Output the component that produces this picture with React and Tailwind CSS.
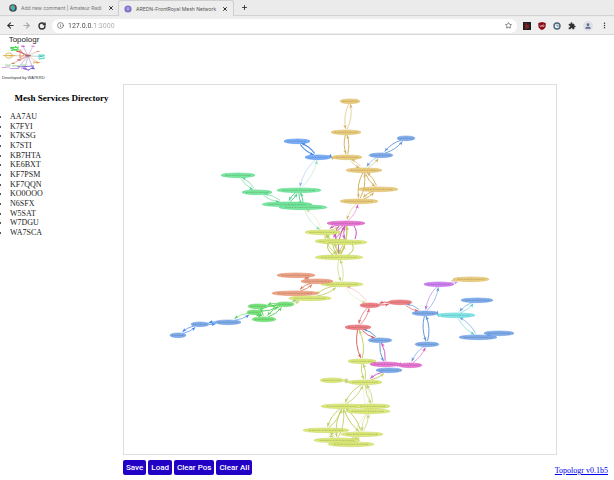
import React from "react";
import { Star, ArrowLeft, ArrowRight, RotateCw, Info, X, Plus } from "lucide-react";
import { MdExtension, MdPerson, MdMoreVert } from "react-icons/md";

const callsigns = [
  "AA7AU", "K7FYI", "K7KSG", "K7STI", "KB7HTA", "KE6BXT", "KF7PSM",
  "KF7QQN", "KO0OOO", "N6SFX", "W5SAT", "W7DGU", "WA7SCA",
];

const hues = {
  tan: { fill: "#eccd7c", line: "#cfab55" },
  blue: { fill: "#80adec", line: "#528cd9" },
  sky: { fill: "#7aaefb", line: "#2e7bea" },
  mint: { fill: "#77e89d", line: "#45cc80" },
  pink: { fill: "#ea76d4", line: "#cb4cb9" },
  lime: { fill: "#dcea78", line: "#bdc957" },
  salmon: { fill: "#efa486", line: "#d67a59" },
  green: { fill: "#78e47c", line: "#4bcf51" },
  red: { fill: "#f08185", line: "#d9525a" },
  violet: { fill: "#cf80f2", line: "#b061da" },
  aqua: { fill: "#80e8ea", line: "#4bc8ca" },
};

// id: [x, y, horizontal radius, hue]
const nodes = {
  a1: [350, 101, 10, "tan"],
  a2: [346, 132, 15, "tan"],
  a3: [347, 157, 15, "tan"],
  b1: [297, 141, 13, "sky"],
  b2: [318, 157, 13, "sky"],
  b3: [406, 138, 9, "blue"],
  b4: [381, 155, 12, "blue"],
  a4: [364, 170, 18, "tan"],
  a5: [378, 189, 20, "tan"],
  a6: [359, 201, 19, "tan"],
  g1: [238, 175, 17, "mint"],
  g2: [257, 192, 15, "mint"],
  g3: [299, 190, 22, "mint"],
  g4: [287, 204, 25, "mint"],
  g5: [303, 207, 24, "mint"],
  m1: [346, 223, 19, "pink"],
  y1: [323, 232, 18, "lime"],
  y2: [332, 241, 17, "lime"],
  y3: [345, 242, 22, "lime"],
  y4: [339, 257, 24, "lime"],
  y5: [342, 284, 21, "lime"],
  s1: [296, 275, 19, "salmon"],
  s2: [317, 281, 16, "salmon"],
  s3: [295, 293, 23, "salmon"],
  y6: [310, 298, 21, "lime"],
  h1: [258, 306, 10, "green"],
  h2: [254, 312, 7, "green"],
  h3: [285, 304, 9, "green"],
  h4: [264, 319, 12, "green"],
  c1: [228, 322, 13, "blue"],
  c2: [200, 324, 9, "blue"],
  c3: [178, 335, 8, "blue"],
  r1: [370, 305, 10, "red"],
  r2: [400, 302, 12, "red"],
  r3: [358, 327, 13, "red"],
  p1: [439, 284, 15, "violet"],
  o1: [471, 279, 18, "tan"],
  d1: [425, 313, 13, "blue"],
  q1: [456, 315, 19, "aqua"],
  d2: [477, 300, 16, "blue"],
  d3: [478, 337, 19, "blue"],
  d4: [499, 333, 15, "blue"],
  d5: [427, 344, 12, "blue"],
  d6: [380, 340, 12, "blue"],
  y7: [362, 361, 14, "lime"],
  m3: [410, 365, 12, "pink"],
  d7: [389, 370, 13, "blue"],
  m2: [385, 364, 15, "pink"],
  y8: [332, 380, 12, "lime"],
  y9: [365, 382, 17, "lime"],
  z1: [343, 406, 22, "lime"],
  z2: [373, 406, 17, "lime"],
  z3: [368, 411, 22, "lime"],
  z4: [326, 430, 23, "lime"],
  z5: [362, 434, 21, "lime"],
  z6: [337, 440, 23, "lime"],
  z7: [351, 444, 23, "lime"],
};

// [from, to, stroke width, hue of outgoing arrow, hue of returning arrow]
const links = [
  ["a1", "a2", 0.6, "tan", "tan"],
  ["a2", "a3", 1, "tan", "tan"],
  ["b1", "b2", 1.1, "sky", "sky"],
  ["b2", "a3", 1, "sky", "tan"],
  ["b3", "b4", 0.9, "blue", "blue"],
  ["b4", "a4", 0.5, "blue", "tan"],
  ["a3", "a4", 0.6, "tan", "tan"],
  ["a4", "a5", 1, "tan", "tan"],
  ["a4", "a6", 1, "tan", "tan"],
  ["a5", "a6", 1, "tan", "tan"],
  ["b2", "g3", 0.4, "sky", "mint"],
  ["g1", "g2", 0.6, "mint", "mint"],
  ["g2", "g4", 0.6, "mint", "mint"],
  ["g3", "g4", 1, "mint", "mint"],
  ["g3", "g5", 1, "mint", "mint"],
  ["g5", "y1", 0.4, "mint", "lime"],
  ["a6", "m1", 0.5, "tan", "pink"],
  ["m1", "y1", 0.8, "pink", "lime"],
  ["m1", "y2", 1, "pink", "pink"],
  ["m1", "y3", 1, "pink", "lime"],
  ["m1", "y4", 1, "pink", "lime"],
  ["y1", "y4", 0.8, "lime", "lime"],
  ["y1", "y2", 1, "lime", "lime"],
  ["y2", "y4", 1, "lime", "lime"],
  ["y3", "y4", 1, "lime", "lime"],
  ["y4", "y5", 0.6, "lime", "lime"],
  ["s1", "s2", 0.7, "salmon", "salmon"],
  ["s2", "s3", 0.9, "salmon", "salmon"],
  ["y5", "y6", 0.9, "lime", "lime"],
  ["y6", "h3", 0.5, "green", "lime"],
  ["h3", "h1", 1, "green", "green"],
  ["h3", "h2", 1, "green", "green"],
  ["h3", "h4", 1, "green", "green"],
  ["h1", "h4", 1, "green", "green"],
  ["h2", "h4", 1, "green", "green"],
  ["h2", "c1", 0.6, "green", "sky"],
  ["c1", "c2", 1, "sky", "sky"],
  ["c2", "c3", 0.7, "sky", "sky"],
  ["y5", "r1", 0.4, "lime", "red"],
  ["r1", "r2", 1, "red", "red"],
  ["r1", "r3", 0.7, "red", "red"],
  ["r2", "d1", 0.7, "red", "blue"],
  ["p1", "o1", 0.4, "violet", "tan"],
  ["p1", "d1", 0.6, "violet", "blue"],
  ["d1", "q1", 0.9, "blue", "aqua"],
  ["q1", "d2", 0.6, "aqua", "blue"],
  ["q1", "d3", 0.6, "aqua", "blue"],
  ["d3", "d4", 0.9, "blue", "blue"],
  ["d1", "d5", 1, "blue", "blue"],
  ["d5", "m3", 0.6, "blue", "pink"],
  ["r3", "d6", 1, "red", "blue"],
  ["r3", "y7", 1, "red", "lime"],
  ["d6", "m2", 1, "blue", "pink"],
  ["m2", "m3", 0.9, "pink", "pink"],
  ["y7", "m2", 0.9, "lime", "blue"],
  ["y7", "y9", 0.9, "lime", "lime"],
  ["y8", "y9", 0.7, "lime", "lime"],
  ["d7", "y9", 1, "pink", "lime"],
  ["y9", "z1", 0.9, "lime", "lime"],
  ["y9", "z2", 0.7, "lime", "lime"],
  ["y9", "z3", 0.3, "lime", "lime"],
  ["z1", "z4", 1, "lime", "lime"],
  ["z1", "z5", 1, "lime", "lime"],
  ["z1", "z6", 0.9, "lime", "lime"],
  ["z3", "z5", 0.5, "lime", "lime"],
  ["z2", "z7", 0.4, "lime", "lime"],
  ["z4", "z6", 0.6, "lime", "lime"],
  ["z5", "z7", 0.8, "lime", "lime"],
];

function rim([x, y, rx], dx, dy) {
  const ry = 3;
  const t = 1 / Math.sqrt((dx * dx) / (rx * rx) + (dy * dy) / (ry * ry));
  return [x + dx * t, y + dy * t];
}

function Arrow({ from, to, width, hue }) {
  const dx = to[0] - from[0];
  const dy = to[1] - from[1];
  const len = Math.hypot(dx, dy);
  const nx = -dy / len;
  const ny = dx / len;
  const [x1, y1] = rim(from, dx, dy);
  const [x2, y2] = rim(to, -dx, -dy);
  const bend = Math.min(6, Math.hypot(x2 - x1, y2 - y1) * 0.2);
  const sx = x1 + nx * 0.8;
  const sy = y1 + ny * 0.8;
  const ex = x2 + nx * 0.8;
  const ey = y2 + ny * 0.8;
  const cx = (x1 + x2) / 2 + nx * bend;
  const cy = (y1 + y2) / 2 + ny * bend;
  const angle = (Math.atan2(ey - cy, ex - cx) * 180) / Math.PI;
  const color = hues[hue].line;
  return (
    <g opacity={width < 0.5 ? 0.65 : 0.9}>
      <path d={`M${sx} ${sy}Q${cx} ${cy} ${ex} ${ey}`} fill="none" stroke={color} strokeWidth={width} />
      <path d="M0 0L-4 -1.6L-3.2 0L-4 1.6Z" fill={color} transform={`translate(${ex} ${ey}) rotate(${angle})`} />
    </g>
  );
}

function MeshGraph() {
  return (
    <svg viewBox="124 85 432 369" className="block w-full" role="img" aria-label="Mesh network map">
      {links.map(([a, b, width, out, back]) => (
        <g key={a + b}>
          <Arrow from={nodes[a]} to={nodes[b]} width={width} hue={out} />
          <Arrow from={nodes[b]} to={nodes[a]} width={width} hue={back} />
        </g>
      ))}
      <path d="M354 226Q358 231 355 239M339 226Q334 231 336 239" fill="none" stroke={hues.pink.line} strokeWidth="1" />
      <path d="M328 244Q326 250 333 255M352 244Q356 250 348 255" fill="none" stroke={hues.lime.line} strokeWidth="1" />
      {Object.entries(nodes).map(([id, [x, y, rx, hue]]) => (
        <g key={id}>
          <ellipse cx={x} cy={y + 0.3} rx={rx} ry="2.4" fill={hues[hue].fill} stroke={hues[hue].line} strokeWidth="0.4" />
          <path
            d={`M${x - rx * 0.75} ${y + 0.3}H${x + rx * 0.75}`}
            stroke="#333"
            strokeOpacity="0.26"
            strokeWidth="1"
            strokeDasharray="1.4 0.5 0.8 0.6"
          />
        </g>
      ))}
    </svg>
  );
}

const spokes = [
  [9, 17, "#c9a227"], [11, 8, "#3fd14a"], [22, 6, "#c644d4"], [32, 6, "#d48ad8"],
  [37, 12, "#e09a80"], [40, 18, "#45c9bb"], [37, 25, "#e0a860"], [32, 32, "#7a5bd0"],
  [24, 32, "#a27ae0"], [18, 30, "#8a6ad0"], [12, 26, "#b85"], [17, 12, "#e05050"], [18, 22, "#e05050"],
];

function MiniMesh() {
  return (
    <svg viewBox="0 0 46 30" className="block h-[30px] w-[46px]" aria-hidden="true">
      <g transform="translate(0 -4) scale(1 .86)">
        {spokes.map(([x, y, c]) => (
          <g key={`${x}-${y}`}>
            <path d={`M27 17L${x} ${y}`} stroke={c} strokeWidth="0.4" />
            <path d={`M27 18L${x} ${y}`} stroke="#caa" strokeWidth="0.3" />
            <ellipse cx={x} cy={y} rx="2" ry="0.8" fill={c} />
          </g>
        ))}
        <path d="M9 8l9-1M10 11l7-1M14 6l4 4M10 9l6 2" stroke="#35d83f" strokeWidth="1" />
        <path d="M19 10v10l4-4zM18 12l9 5" fill="none" stroke="#e05858" strokeWidth="0.7" />
        <ellipse cx="8" cy="17" rx="3.5" ry="3" fill="none" stroke="#d1a733" strokeWidth="0.8" />
        <path d="M2 17h12" stroke="#d8b24a" strokeWidth="1" />
        <path d="M38 17l5-1v4l-5 1zM37 16l7 1M38 21l6-1" fill="none" stroke="#58cfc4" strokeWidth="0.8" />
        <ellipse cx="27" cy="17" rx="3" ry="1" fill="#9a6868" />
        <path d="M4 28h6M11 29h7M20 28h5" stroke="#7bcf80" strokeWidth="0.9" />
        <path d="M1 31l8-1M9 32h9M20 32l5-2" stroke="#c07ad8" strokeWidth="0.8" />
        <path d="M20 30l13-1M27 34l6-4M22 32l6 2" stroke="#7d65d6" strokeWidth="1" />
        <path d="M32 24l5 2M32 26l4-2" stroke="#e2ab62" strokeWidth="0.9" />
      </g>
    </svg>
  );
}

function Tab({ title, active, children }) {
  return (
    <div
      className={
        active
          ? "flex h-4 w-[116px] items-center gap-1 rounded-t-[3px] border border-b-0 border-[#cfcfcf] bg-[#ededed] px-[5px]"
          : "flex h-4 w-[118px] items-center gap-1 border-b border-[#d2d2d2] pr-1 pl-[9px]"
      }
    >
      {children}
      <span className={`min-w-0 flex-1 whitespace-nowrap ${active ? "text-[#555]" : "text-[#777]"}`}>{title}</span>
      <button type="button" aria-label="Close tab" className="text-[#333]">
        <X size={6} strokeWidth={4} />
      </button>
    </div>
  );
}

function Browser() {
  return (
    <header className="border-b border-[#d8d8d8] bg-[#ebebeb] font-['Roboto',sans-serif]">
      <div className="flex h-[17px] items-end pb-px font-['Inter',sans-serif] text-[5px] leading-[8px]">
        <Tab title="Add new comment | Amateur Radi">
          <svg viewBox="0 0 8 8" className="h-2 w-2 shrink-0" aria-hidden="true">
            <circle cx="4" cy="4" r="3.8" fill="#394a4c" />
            <path d="M2 2l2-1 2 1v3L4 7 2 5z" fill="#32b9b8" />
            <path d="M1 2l1 3M5 2l1 2" stroke="#db5b57" strokeWidth="0.9" />
          </svg>
        </Tab>
        <Tab active title="AREDN-FrontRoyal Mesh Network">
          <svg viewBox="0 0 8 8" className="h-2 w-2 shrink-0" aria-hidden="true">
            <circle cx="4" cy="4" r="3.6" fill="#7c74c9" />
            <path d="M2.5 3h3M2.5 4.2h3M4 2v4" stroke="#c9c5f0" strokeWidth="0.6" />
          </svg>
        </Tab>
        <div className="flex h-4 flex-1 items-center border-b border-[#d2d2d2] pl-[7px]">
          <button type="button" aria-label="New tab" className="text-[#333]">
            <Plus size={7} strokeWidth={3} />
          </button>
        </div>
      </div>
      <div className="flex h-[17px] items-center bg-[#efefef] px-1.5">
        <div className="flex w-[46px] items-center gap-[7px] text-[#333]">
          <button type="button" aria-label="Back"><ArrowLeft size={9} strokeWidth={3} /></button>
          <button type="button" aria-label="Forward" className="text-[#aaa]"><ArrowRight size={9} strokeWidth={3} /></button>
          <button type="button" aria-label="Reload"><RotateCw size={8} strokeWidth={4} /></button>
        </div>
        <div className="flex h-[14px] min-w-0 flex-1 items-center rounded-full bg-white px-[5px]">
          <Info size={7} strokeWidth={2} className="shrink-0 text-[#444]" />
          <input
            aria-label="Address"
            defaultValue="127.0.0.1:3000"
            className="ml-1 min-w-0 flex-1 bg-[linear-gradient(90deg,#444_27px,#aaa_27px)] bg-clip-text text-[7px] leading-[10px] text-transparent outline-none"
          />
          <button type="button" aria-label="Bookmark"><Star size={7} strokeWidth={2} className="text-[#333]" /></button>
        </div>
        <div className="flex items-center gap-[7px] pl-1.5">
          <button type="button" aria-label="Script extension">
            <svg viewBox="0 0 8 8" className="h-2 w-2">
              <path d="M0 0h8v8H0z" fill="#231f20" />
              <path d="M3 1v6M3 4.5l2-1v3M5 3.5l1-1" fill="none" stroke="#bd2725" />
            </svg>
          </button>
          <button type="button" aria-label="Shield extension">
            <svg viewBox="0 0 8 8" className="h-2 w-2">
              <path d="M4 0l3.7 1v3C7.7 6 5.5 7.5 4 8 2.5 7.5.3 6 .3 4V1z" fill="#8c0d18" />
              <path d="M2 3v1.5h1.5V3M4.5 3h1.5v1.5h-1.5z" fill="none" stroke="#eac6c9" strokeWidth="0.6" />
            </svg>
          </button>
          <button type="button" aria-label="Clock extension">
            <svg viewBox="0 0 8 8" className="h-2 w-2">
              <circle cx="4" cy="4" r="3.7" fill="#4b6478" />
              <circle cx="4" cy="4" r="2.3" fill="#eef3f6" />
              <path d="M4 2.5V4h1.8" fill="none" stroke="#4b6478" strokeWidth="0.8" />
            </svg>
          </button>
          <button type="button" aria-label="Extensions" className="text-[#333]"><MdExtension size={8} /></button>
          <button type="button" aria-label="Profile" className="rounded-full bg-[#dcdfe8] p-px text-[#5d6b84]"><MdPerson size={8} /></button>
          <button type="button" aria-label="Menu" className="-mr-px text-[#333]"><MdMoreVert size={9} /></button>
        </div>
      </div>
    </header>
  );
}

function Action({ children }) {
  return (
    <button
      type="button"
      className="h-[15px] rounded-[2px] bg-[#2200c6] px-[3px] font-['Roboto',sans-serif] text-[8px] leading-[15px] font-medium text-white"
    >
      {children}
    </button>
  );
}

export default function App() {
  return (
    <div className="min-h-screen bg-white font-['Liberation_Serif',serif] text-black">
      <Browser />
      <div className="flex">
        <aside className="w-[123px] shrink-0">
          <div className="flex w-12 flex-col items-center font-['Liberation_Sans',sans-serif]">
            <h1 className="text-[8px] leading-[10px] text-[#222]">Topologr</h1>
            <MiniMesh />
            <p className="self-start pl-0.5 text-[4px] leading-[6px] whitespace-nowrap text-[#333]">Developed by WA7KRD</p>
          </div>
          <h2 className="mt-[11px] text-center text-[9px] leading-[12px] font-bold">Mesh Services Directory</h2>
          <ul className="mt-2 flex h-[125px] list-disc flex-col justify-between pl-[10px] text-[8px] leading-[9px] text-[#222]">
            {callsigns.map((c) => (
              <li key={c}>{c}</li>
            ))}
          </ul>
        </aside>
        <main className="mt-[49px] mr-[57px] min-w-0 flex-1">
          <div className="border border-[#dedede]">
            <MeshGraph />
          </div>
        </main>
      </div>
      <footer className="flex items-start justify-between pt-[5px] pr-[6px] pl-[123px]">
        <div className="flex gap-0.5">
          <Action>Save</Action>
          <Action>Load</Action>
          <Action>Clear Pos</Action>
          <Action>Clear All</Action>
        </div>
        <a href="#" className="mt-1.5 text-[8px] leading-[10px] text-[#0000ee] underline">Topologr v0.1b5</a>
      </footer>
    </div>
  );
}
